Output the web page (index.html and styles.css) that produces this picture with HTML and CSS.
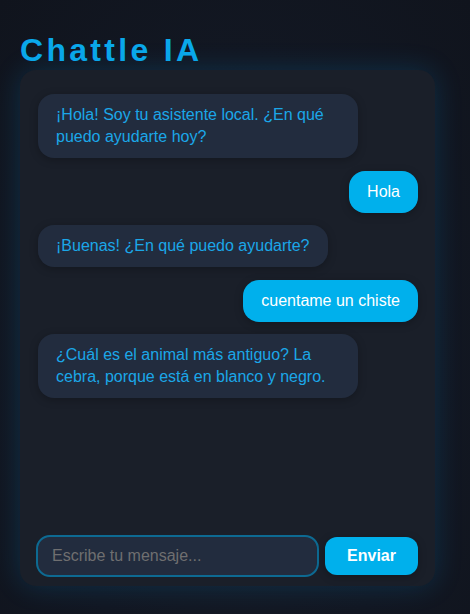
FILE: index.html
```html
<!DOCTYPE html>
<html lang="es">
<head>
<meta charset="utf-8">
<title>Chattle IA</title>
<link rel="stylesheet" href="styles.css">
</head>
<body>
<div class="app">
  <h1 class="title">Chattle IA</h1>
  <div class="chat">
    <div class="messages">
      <div class="msg bot">¡Hola! Soy tu asistente local. ¿En qué puedo ayudarte hoy?</div>
      <div class="msg user">Hola</div>
      <div class="msg bot">¡Buenas! ¿En qué puedo ayudarte?</div>
      <div class="msg user">cuentame un chiste</div>
      <div class="msg bot">¿Cuál es el animal más antiguo? La cebra, porque está en blanco y negro.</div>
    </div>
    <form class="composer">
      <input class="input" type="text" placeholder="Escribe tu mensaje...">
      <button class="send" type="button">Enviar</button>
    </form>
  </div>
</div>
</body>
</html>
```
FILE: styles.css
```css
* { box-sizing: border-box; }
html, body { height: 100%; }
body {
  margin: 0;
  font-family: "Liberation Sans", Arial, sans-serif;
  background: radial-gradient(ellipse at 50% 60%, #161c27 0%, #121722 60%, #10141d 100%);
  color: #1ba7e8;
}
.app {
  padding: 32px 35px 28px 20px;
  height: 100%;
  display: flex;
  flex-direction: column;
}
.title {
  margin: 0 0 1px;
  font-size: 32px;
  font-weight: 700;
  letter-spacing: 3.3px;
  color: #0aa8ea;
  line-height: 37px;
}
.chat {
  flex: 1;
  display: flex;
  flex-direction: column;
  background: #1a1f29;
  border-radius: 16px;
  box-shadow: 0 0 28px rgba(0, 150, 230, 0.2);
  padding: 24px 17px 9px 16px;
}
.messages {
  flex: 1;
  display: flex;
  flex-direction: column;
  gap: 12.5px;
  padding-left: 2px;
}
.msg {
  max-width: 320px;
  padding: 10px 18px;
  font-size: 16px;
  line-height: 22px;
  border-radius: 16px;
  box-shadow: 0 2px 8px rgba(0, 0, 0, 0.25);
}
.bot {
  align-self: flex-start;
  background: #222c3e;
  color: #1ba7e8;
}
.user {
  align-self: flex-end;
  background: #00b0ec;
  color: #ffffff;
}
.composer {
  display: flex;
  align-items: center;
  gap: 6px;
  margin: 0;
}
.input {
  width: 283px;
  height: 42px;
  border: 2px solid #0d6a92;
  border-radius: 14px;
  background: #222c3e;
  padding: 0 14px;
  font-family: inherit;
  font-size: 16px;
  color: #ddd;
  outline: none;
}
.input::placeholder { color: #6f6f70; }
.send {
  flex: 1;
  height: 38px;
  border: 0;
  border-radius: 12px;
  background: #00b0ec;
  color: #ffffff;
  font-family: inherit;
  font-weight: 700;
  font-size: 16px;
  box-shadow: 0 2px 8px rgba(0, 0, 0, 0.25);
}
```
